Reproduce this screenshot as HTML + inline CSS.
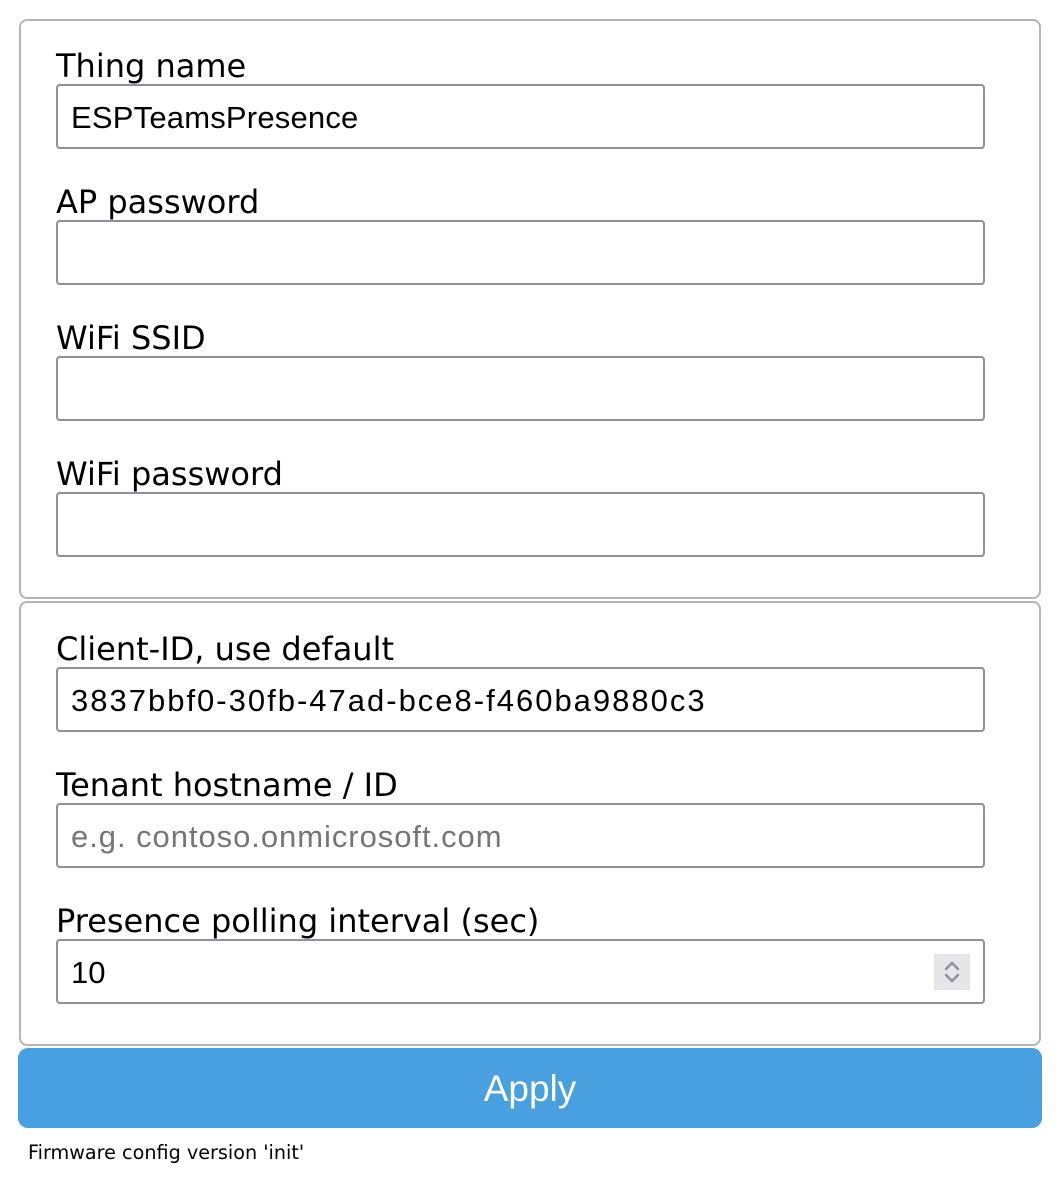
<!DOCTYPE html>
<html><head><meta charset="utf-8"><style>
html,body{margin:0;padding:0;background:#fff;width:1064px;height:1186px;overflow:hidden;position:relative}
.fs{position:absolute;left:19px;width:1022px;border:2px solid #b5b5b5;border-radius:8px;box-sizing:border-box}
.lbl{position:absolute;left:56px;font-family:"DejaVu Sans",Verdana,sans-serif;font-size:32px;color:#000;line-height:1;white-space:nowrap}
.inp{position:absolute;left:56px;width:929px;height:65px;box-sizing:border-box;border:2px solid #8f8f9d;border-radius:4px;font-family:"Liberation Sans",Arial,sans-serif;font-size:31px;color:#000;padding-left:13px;line-height:63px;white-space:nowrap}
.ph{color:#767676}
.btn{position:absolute;left:18px;top:1048px;width:1024px;height:80px;background:#48a0e0;border-radius:10px;color:#fff;font-family:"Liberation Sans",Arial,sans-serif;font-size:37px;text-align:center;line-height:82px}
.foot{position:absolute;left:28px;top:1141px;font-family:"DejaVu Sans",Verdana,sans-serif;font-size:19.2px;color:#000;white-space:nowrap}
.spin{position:absolute;right:13px;top:13px;width:36px;height:36px;background:#e6e6ea}
</style></head><body>
<div class="fs" style="top:19px;height:580px"></div>
<div class="fs" style="top:601px;height:445px"></div>

<div class="lbl" style="top:50px">Thing name</div>
<div class="inp" style="top:84px;letter-spacing:0.2px">ESPTeamsPresence</div>
<div class="lbl" style="top:186px">AP password</div>
<div class="inp" style="top:220px"></div>
<div class="lbl" style="top:322px">WiFi SSID</div>
<div class="inp" style="top:356px"></div>
<div class="lbl" style="top:458px">WiFi password</div>
<div class="inp" style="top:492px"></div>

<div class="lbl" style="top:633px">Client-ID, use default</div>
<div class="inp" style="top:667px;letter-spacing:2px">3837bbf0-30fb-47ad-bce8-f460ba9880c3</div>
<div class="lbl" style="top:769px">Tenant hostname / ID</div>
<div class="inp ph" style="top:803px;letter-spacing:0.95px">e.g. contoso.onmicrosoft.com</div>
<div class="lbl" style="top:905px">Presence polling interval (sec)</div>
<div class="inp" style="top:939px">10<div class="spin"><svg width="36" height="36" viewBox="0 0 36 36" style="display:block"><path d="M12 15 L18 9 L24 15 M12 21 L18 27 L24 21" fill="none" stroke="#8f8f9d" stroke-width="2.5" stroke-linecap="round" stroke-linejoin="round"/></svg></div></div>

<div class="btn">Apply</div>
<div class="foot">Firmware config version 'init'</div>
</body></html>
